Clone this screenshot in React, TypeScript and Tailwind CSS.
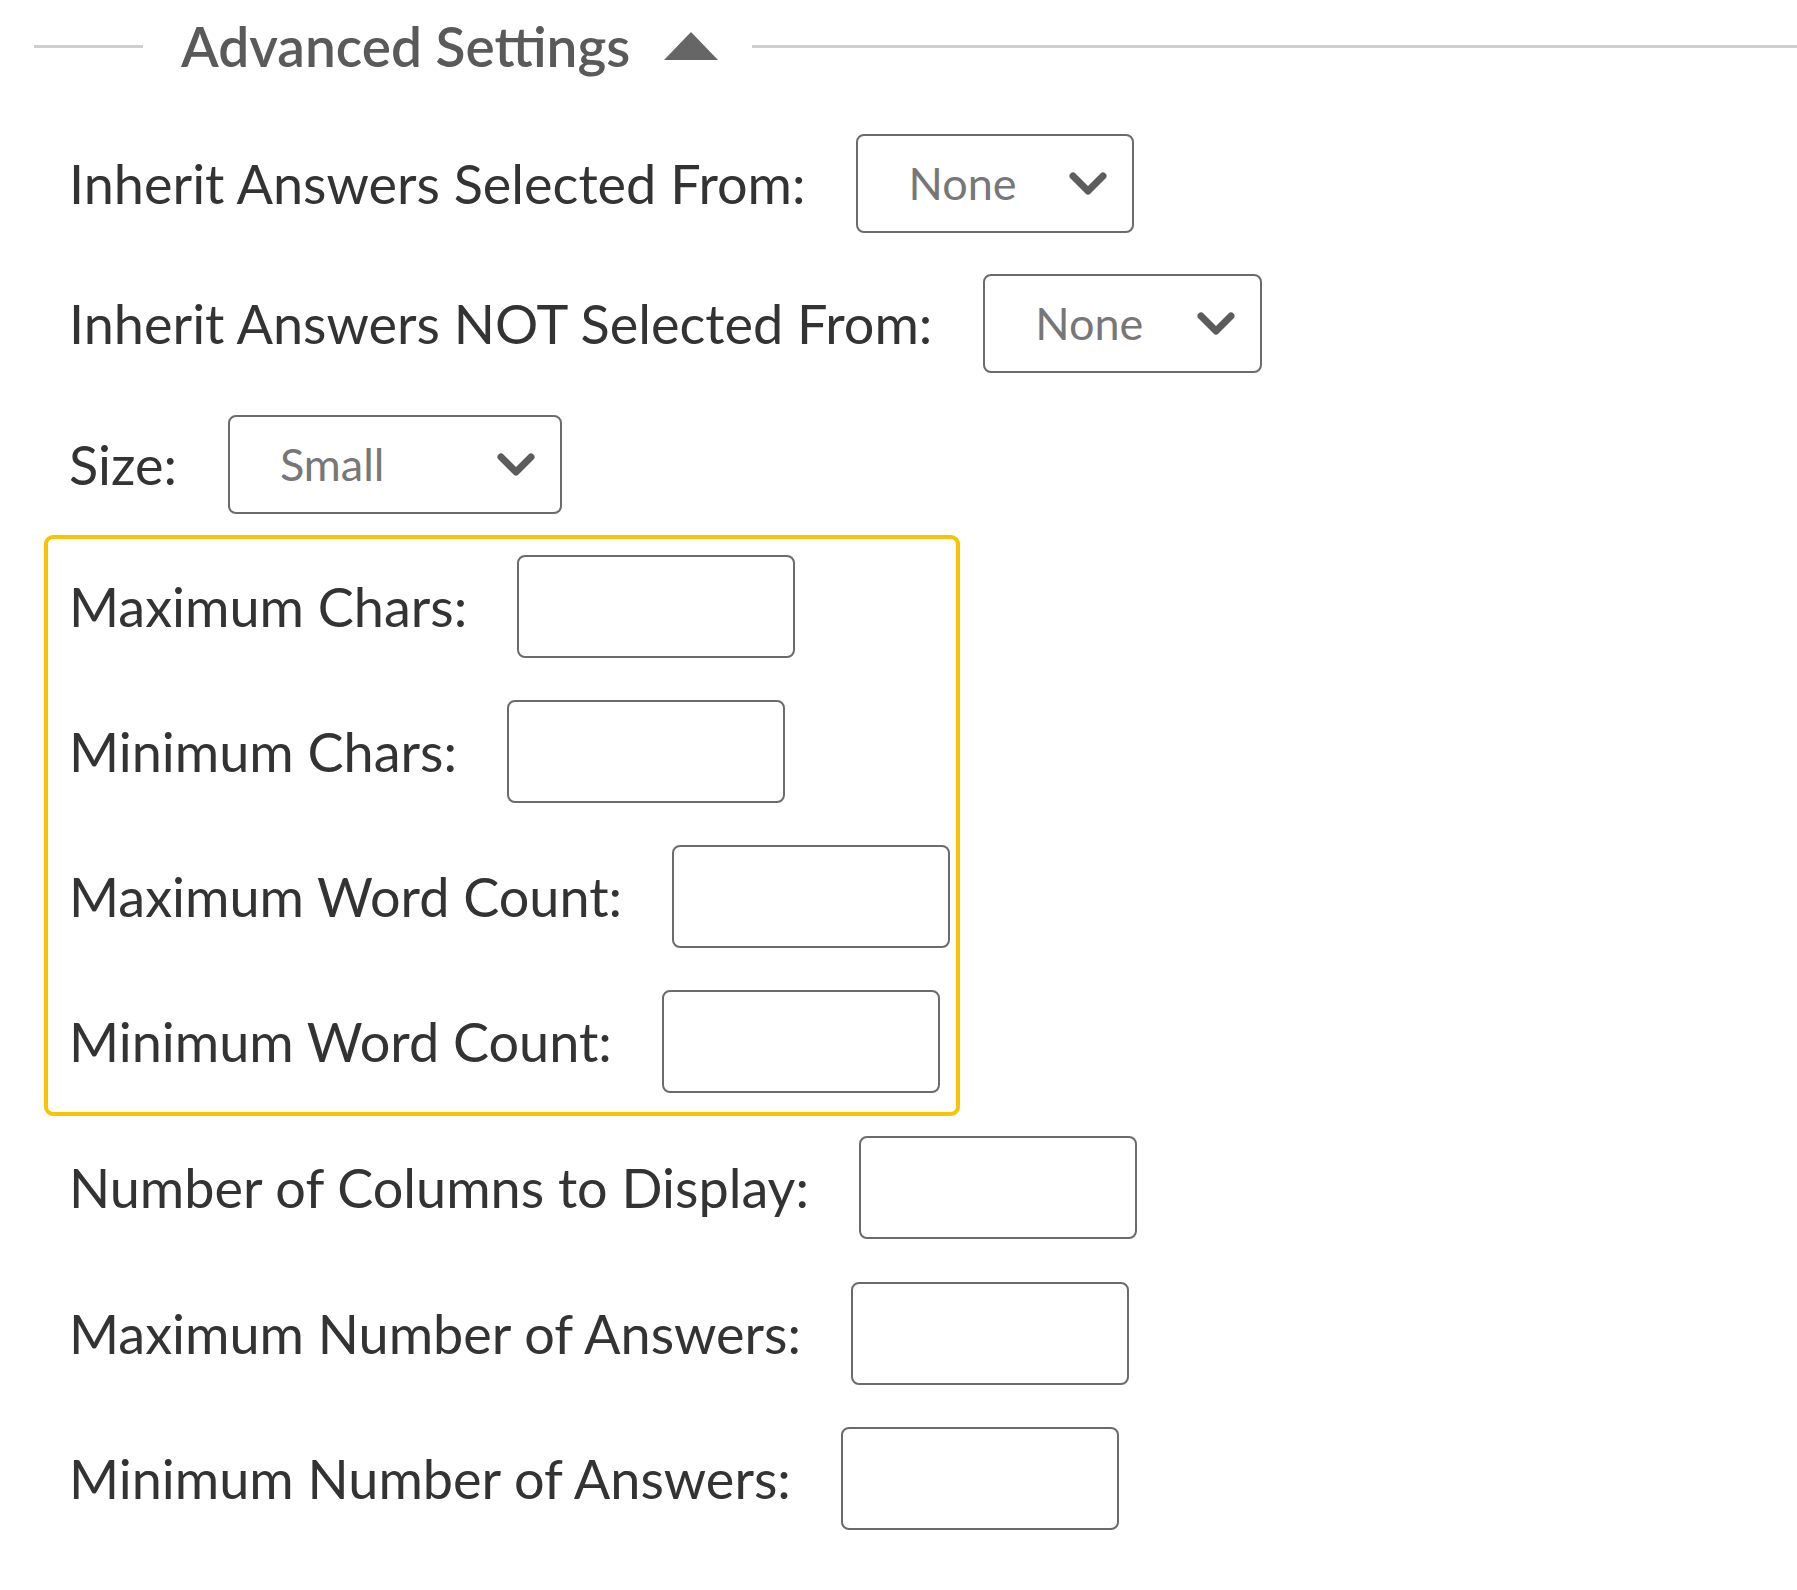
import React from "react"

const labelCls = "text-[54px] leading-none text-[#333] whitespace-nowrap"

const Chevron = () => (
    <svg width="40" height="28" viewBox="0 0 40 28" fill="none">
        <path d="M5 6 L20 21 L35 6" stroke="#5c5c5c" strokeWidth="7" strokeLinecap="round" strokeLinejoin="round" />
    </svg>
)

const SelectRow = ({ label, value, width, mt }: { label: string, value: string, width: string, mt: string }) => (
    <div className={`flex items-center gap-[51px] pl-[25px] ${mt}`}>
        <span className={labelCls}>{label}</span>
        <div className={`flex items-center justify-between h-[99px] border-2 border-[#6b6b6b] rounded-[8px] bg-white pl-[50px] pr-[24px] ${width}`}>
            <span className="text-[45px] leading-none text-[#777]">{value}</span>
            <Chevron />
        </div>
    </div>
)

const InputRow = ({ label, mt }: { label: string, mt: string }) => (
    <div className={`flex items-center gap-[50px] ${mt}`}>
        <span className={labelCls}>{label}</span>
        <input type="text" className="w-[278px] h-[103px] border-2 border-[#6b6b6b] rounded-[8px] bg-white outline-none" />
    </div>
)

const App = () => {
    return (
        <div className="w-[1797px] h-[1590px] bg-white pl-[34px] font-['Lato','Noto_Sans',sans-serif]">
            {/* header with collapse toggle */}
            <div className="flex items-center h-[92px]">
                <div className="w-[109px] h-[3px] bg-[#cfcfcf]"></div>
                <span className="ml-[38px] text-[55px] leading-none text-[#5a5a5a] font-semibold whitespace-nowrap">Advanced Settings</span>
                <svg className="ml-[34px]" width="54" height="28" viewBox="0 0 54 28">
                    <polygon points="27,0 54,28 0,28" fill="#666" />
                </svg>
                <div className="ml-[34px] flex-1 h-[3px] bg-[#cfcfcf]"></div>
            </div>

            <div className="pl-[10px]">
                <SelectRow label="Inherit Answers Selected From:" value="None" width="w-[278px]" mt="mt-[42px]" />
                <SelectRow label="Inherit Answers NOT Selected From:" value="None" width="w-[279px]" mt="mt-[41px]" />
                <SelectRow label="Size:" value="Small" width="w-[334px]" mt="mt-[42px]" />

                {/* highlighted group */}
                <div className="mt-[21px] w-[916px] border-[4px] border-[#f8c300] rounded-[9px] pl-[21px] pt-[16px] pb-[19px]">
                    <InputRow label="Maximum Chars:" mt="" />
                    <InputRow label="Minimum Chars:" mt="mt-[42px]" />
                    <InputRow label="Maximum Word Count:" mt="mt-[42px]" />
                    <InputRow label="Minimum Word Count:" mt="mt-[42px]" />
                </div>

                <div className="pl-[25px]">
                    <InputRow label="Number of Columns to Display:" mt="mt-[20px]" />
                    <InputRow label="Maximum Number of Answers:" mt="mt-[43px]" />
                    <InputRow label="Minimum Number of Answers:" mt="mt-[42px]" />
                </div>
            </div>
        </div>
    )
}

export default App
